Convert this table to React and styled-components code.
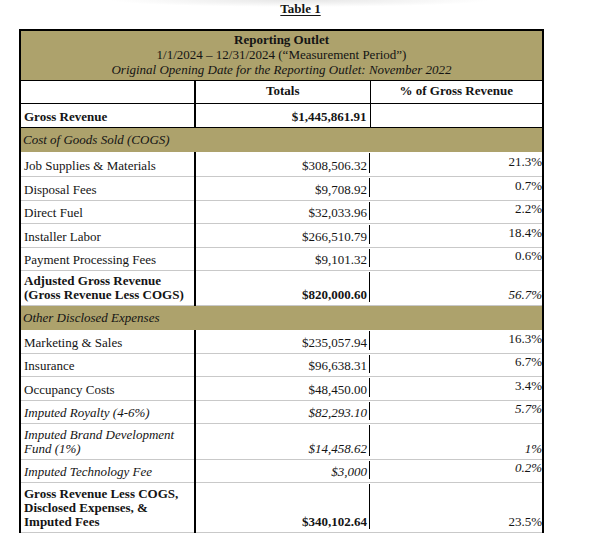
import React from "react";
import styled, { createGlobalStyle } from "styled-components";

const GlobalStyle = createGlobalStyle`
  html, body {
    margin: 0;
    background: #fff;
  }
  body {
    font-family: "Liberation Serif", "Times New Roman", serif;
    color: #141414;
  }
`;

const OLIVE = "#ada26c";
const RULE = "#c9c9c9";

const Page = styled.div`
  width: 601px;
  min-height: 542px;
  background: radial-gradient(ellipse 190px 7px at 300px 0, #e6e6e6, rgba(255, 255, 255, 0));
`;

const Caption = styled.div`
  text-align: center;
  font-weight: bold;
  font-size: 13px;
  line-height: 15px;
  padding-top: 1px;
  height: 29px;
  box-sizing: border-box;

  span {
    text-decoration: underline;
    text-underline-offset: 2px;
  }
`;

const Table = styled.table`
  width: 523px;
  margin-left: 19px;
  border-collapse: collapse;
  table-layout: fixed;
  font-size: 13px;
  line-height: 14px;
  border: 2px solid #000;
  border-bottom: none;
`;

const Row = styled.tr`
  height: ${({ $h }) => $h}px;
`;

const Band = styled.td`
  background: ${OLIVE};
  border-bottom: ${({ $center }) => ($center ? "1px solid #000" : "none")};
  padding: ${({ $center }) => ($center ? "1px 0 2px" : "2px 2px 3px")};
  text-align: ${({ $center }) => ($center ? "center" : "left")};
  font-style: ${({ $center }) => ($center ? "normal" : "italic")};
  line-height: 15px;
  vertical-align: middle;
`;

const Strong = styled.div`
  font-weight: bold;
`;

const Slant = styled.div`
  font-style: italic;
`;

const HeadCell = styled.td`
  font-weight: bold;
  text-align: center;
  vertical-align: middle;
  padding: 0 0 2px;
  border-bottom: 1px solid #000;
  border-right: ${({ $edge }) => ($edge === "thick" ? "2px" : "1px")} solid #000;
`;

const LabelCell = styled.td`
  padding: 0 2px 3px 3px;
  vertical-align: bottom;
  font-weight: ${({ $bold }) => ($bold ? "bold" : "normal")};
  font-style: ${({ $italic }) => ($italic ? "italic" : "normal")};
  border-right: 2px solid #000;
  border-bottom: 1px solid ${({ $strongRule }) => ($strongRule ? "#000" : RULE)};
`;

const ValueCell = styled.td`
  position: relative;
  padding: 0 3px 3px 0;
  text-align: right;
  vertical-align: bottom;
  white-space: nowrap;
  font-weight: ${({ $bold }) => ($bold ? "bold" : "normal")};
  font-style: ${({ $italic }) => ($italic ? "italic" : "normal")};
  border-bottom: 1px solid ${({ $strongRule }) => ($strongRule ? "#000" : RULE)};
  border-right: ${({ $solid }) => ($solid ? "1px solid #000" : "none")};

  &::after {
    content: ${({ $solid }) => ($solid ? "none" : "''")};
    position: absolute;
    right: 0;
    top: 1px;
    bottom: 3px;
    width: 1px;
    background: #000;
  }
`;

const PctCell = styled.td`
  padding: 0 0 ${({ $lift }) => ($lift ? "7px" : "3px")} 0;
  text-align: right;
  vertical-align: bottom;
  white-space: nowrap;
  font-style: ${({ $italic }) => ($italic ? "italic" : "normal")};
  border-bottom: 1px solid ${({ $strongRule }) => ($strongRule ? "#000" : RULE)};
`;

const cogs = [
  { label: "Job Supplies & Materials", value: "$308,506.32", pct: "21.3%", h: 24 },
  { label: "Disposal Fees", value: "$9,708.92", pct: "0.7%", h: 24 },
  { label: "Direct Fuel", value: "$32,033.96", pct: "2.2%", h: 23 },
  { label: "Installer Labor", value: "$266,510.79", pct: "18.4%", h: 24 },
  { label: "Payment Processing Fees", value: "$9,101.32", pct: "0.6%", h: 23 },
  {
    label: ["Adjusted Gross Revenue", "(Gross Revenue Less COGS)"],
    value: "$820,000.60",
    pct: "56.7%",
    h: 35,
    bold: true,
    pctItalic: true,
  },
];

const other = [
  { label: "Marketing & Sales", value: "$235,057.94", pct: "16.3%", h: 23 },
  { label: "Insurance", value: "$96,638.31", pct: "6.7%", h: 23 },
  { label: "Occupancy Costs", value: "$48,450.00", pct: "3.4%", h: 24 },
  { label: "Imputed Royalty (4-6%)", value: "$82,293.10", pct: "5.7%", h: 23, italic: true },
  {
    label: ["Imputed Brand Development", "Fund (1%)"],
    value: "$14,458.62",
    pct: "1%",
    h: 36,
    italic: true,
  },
  { label: "Imputed Technology Fee", value: "$3,000", pct: "0.2%", h: 23, italic: true },
  {
    label: ["Gross Revenue Less COGS,", "Disclosed Expenses, &", "Imputed Fees"],
    value: "$340,102.64",
    pct: "23.5%",
    h: 50,
    bold: true,
  },
];

function Line({ item }) {
  const multi = Array.isArray(item.label);
  return (
    <Row $h={item.h}>
      <LabelCell $bold={item.bold} $italic={item.italic}>
        {multi ? item.label.map((t) => <div key={t}>{t}</div>) : item.label}
      </LabelCell>
      <ValueCell $bold={item.bold} $italic={item.italic}>
        {item.value}
      </ValueCell>
      <PctCell $lift={!multi} $italic={item.italic || item.pctItalic}>
        {item.pct}
      </PctCell>
    </Row>
  );
}

function SectionBand({ children }) {
  return (
    <Row $h={25}>
      <Band colSpan={3}>{children}</Band>
    </Row>
  );
}

export default function App() {
  return (
    <Page>
      <GlobalStyle />
      <Caption>
        <span>Table 1</span>
      </Caption>
      <Table>
        <colgroup>
          <col style={{ width: 175 }} />
          <col style={{ width: 175 }} />
          <col style={{ width: 173 }} />
        </colgroup>
        <tbody>
          <Row $h={50}>
            <Band colSpan={3} $center>
              <Strong>Reporting Outlet</Strong>
              <div>1/1/2024 – 12/31/2024 (“Measurement Period”)</div>
              <Slant>Original Opening Date for the Reporting Outlet: November 2022</Slant>
            </Band>
          </Row>
          <Row $h={23}>
            <HeadCell $edge="thick" />
            <HeadCell>Totals</HeadCell>
            <HeadCell $edge="none">% of Gross Revenue</HeadCell>
          </Row>
          <Row $h={24}>
            <LabelCell $bold $strongRule>
              Gross Revenue
            </LabelCell>
            <ValueCell $bold $solid $strongRule>
              $1,445,861.91
            </ValueCell>
            <PctCell $strongRule />
          </Row>
          <SectionBand>Cost of Goods Sold (COGS)</SectionBand>
          {cogs.map((item) => (
            <Line key={item.value} item={item} />
          ))}
          <SectionBand>Other Disclosed Expenses</SectionBand>
          {other.map((item) => (
            <Line key={item.value} item={item} />
          ))}
        </tbody>
      </Table>
    </Page>
  );
}
